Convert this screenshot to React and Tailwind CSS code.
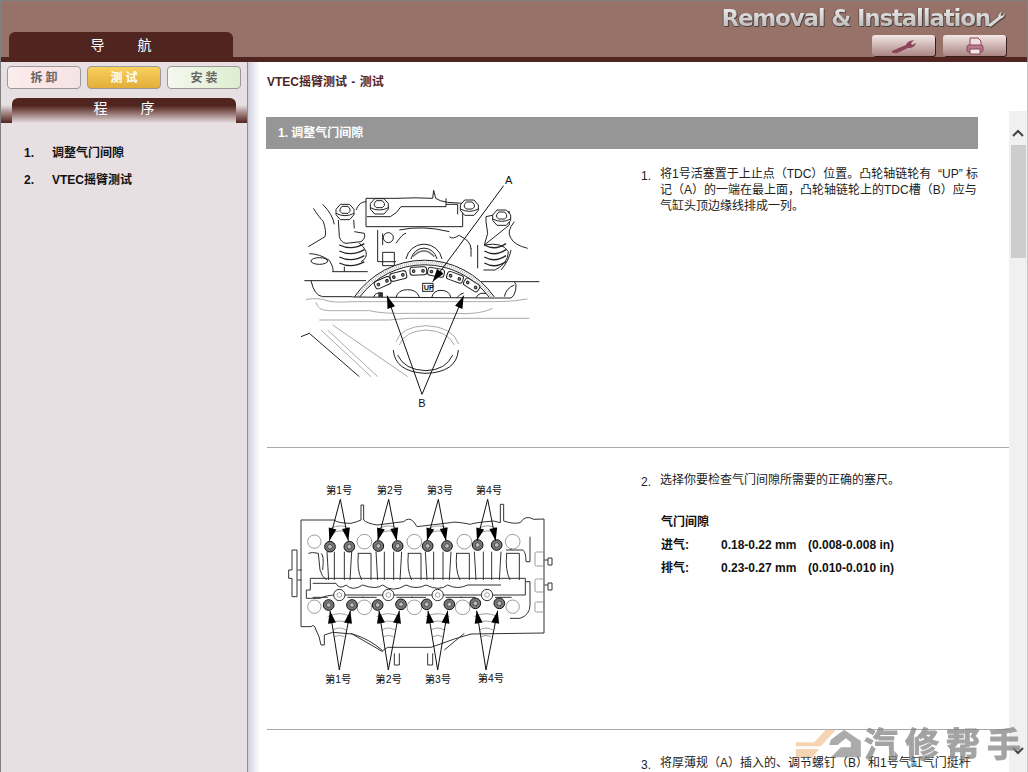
const cjk = "font-['Liberation_Sans','Noto_Sans_CJK_SC',sans-serif]";

// filled arrow head with tip at (x,y), coming from (fx,fy)
function Head({ x, y, fx, fy, len = 38, wide = 12 }) {
  const d = Math.hypot(x - fx, y - fy);
  const ux = (x - fx) / d;
  const uy = (y - fy) / d;
  const bx = x - ux * len;
  const by = y - uy * len;
  const pts = `${x},${y} ${bx - uy * wide},${by + ux * wide} ${bx + uy * wide},${by - ux * wide}`;
  return <polygon points={pts} fill="#000" stroke="none" />;
}

function Leader({ x, y, fx, fy }) {
  return (
    <g>
      <line x1={fx} y1={fy} x2={x} y2={y} stroke="#111" strokeWidth="3" />
      <Head x={x} y={y} fx={fx} fy={fy} />
    </g>
  );
}

function Bolt({ x, y }) {
  return (
    <g fill="#fff" stroke="#222" strokeWidth="3">
      <path d={`M${x - 27} ${y - 8}l13 -15h28l13 15v16l-13 15h-28l-13 -15z`} />
      <path d={`M${x - 27} ${y + 4}q27 14 54 0`} fill="none" />
      <path d={`M${x - 15} ${y - 9}l6 -8h18l6 8v7l-6 6h-18l-6 -6z`} />
    </g>
  );
}

function Spring({ x, w }) {
  return (
    <g fill="none" stroke="#222" strokeWidth="4">
      {[240, 258, 276, 294].map((y) => (
        <path key={y} d={`M${x} ${y}q${w / 2} 18 ${w} -4`} />
      ))}
    </g>
  );
}

// rocker arm timing diagram, drawn in 3x units
function TimingFigure() {
  const links = [
    [305, 353, -24], [352, 333, -14], [412, 318, -2], [465, 322, 10], [522, 337, 20], [572, 360, 32],
  ];
  return (
    <svg className="block h-[250px] w-[260px]" viewBox="0 0 780 750">
      <g fill="none" stroke="#999" strokeWidth="2.5">
        <path d="M75 403q40 -5 60 3t80 4h430q50 0 95 -8" />
        <path d="M105 412q5 25 40 25h120q40 10 130 8h130q70 5 110 -15" />
        <path d="M115 465h210q60 -8 110 -5h310" />
        <path d="M120 495l150 140M140 495l150 140M155 480l225 155" />
        <path d="M345 530q15 -45 90 -48q80 3 98 55M355 540q15 -42 80 -45q65 3 85 45" />
      </g>
      <g fill="none" stroke="#222" strokeWidth="3">
        <path d="M70 347h185M90 347q10 45 35 48h90M215 396l425 3h50q15 -10 15 -40l-5 -9M600 350h175" />
        <path d="M60 515l25 -10l150 130" />
        <path d="M337 555q5 65 95 70q95 -2 100 -70M350 570q20 45 85 47q60 -2 80 -47" />

        {/* sprocket bands */}
        <path d="M220 396a255 255 0 0 1 420 0M236 396a243 243 0 0 1 388 0" />
        <path d="M228 396a249 249 0 0 1 404 0" strokeWidth="8" strokeDasharray="1 5" stroke="#555" />
        <path d="M345 398q5 -24 35 -24q28 0 36 24M452 398q5 -22 28 -22q25 0 30 22M278 396q5 -14 22 -12M585 398q10 -18 30 -12M528 398q8 -12 20 -14" />

        {/* cap */}
        <path d="M255 100h90q60 -3 110 0l3 -24l6 24q10 8 36 12l45 3" />
        <path d="M255 100v85h290v-70" />
        <path d="M258 155h70q20 -10 32 -30h135M495 100v25M495 118h35v30" />
        <path d="M290 195v95M305 205v35M305 262h35v40h-35zM290 290h55" />
        <circle cx="322" cy="218" r="15" />
        <path d="M355 195q70 -15 150 5M345 235q20 -30 30 -30M505 215q10 10 30 -5M535 212q35 15 35 40M590 240v70M570 250v25" />
        <path d="M375 282a55 55 0 0 1 108 0M390 282a40 42 0 0 1 78 0" />
        <path d="M395 275q35 -35 65 0" strokeWidth="5" stroke="#777" />

        {/* left rocker and spring */}
        <path d="M172 165l3 50q5 18 20 20l45 -5q15 -10 10 -25l-30 -5M218 165l2 25M225 135q10 -25 30 -25" />
        <path d="M97 130q20 30 30 40q10 30 5 45l-50 30M125 118q30 30 35 60" />
        <path d="M85 266q30 0 60 20q15 25 10 34h105" />
        <ellipse cx="115" cy="288" rx="25" ry="10" />
        <path d="M240 290q20 -10 15 -30q-5 -15 -20 -25M190 320v-15" />

        {/* right rocker and spring */}
        <path d="M615 155v15l5 35l-10 35l75 -60v-40M615 155l70 -15" />
        <path d="M610 240q55 -10 72 20q0 35 -40 55h-35" />
        <path d="M700 170q-25 30 -10 50q10 20 50 30" />
        <path d="M690 255q-5 30 -30 60M700 360q-25 10 -30 35" />
      </g>
      <Spring x={175} w={75} />
      <Spring x={610} w={65} />
      <Bolt x={192} y={141} />
      <Bolt x={295} y={124} />
      <Bolt x={565} y={128} />
      <Bolt x={662} y={158} />
      {links.map(([x, y, r]) => (
        <g key={x} transform={`rotate(${r} ${x} ${y})`} fill="#fff" stroke="#222" strokeWidth="3">
          <rect x={x - 25} y={y - 12} width="50" height="24" rx="8" />
          <circle cx={x - 14} cy={y} r="4" fill="#888" />
          <circle cx={x + 14} cy={y} r="4" fill="#888" />
        </g>
      ))}
      <rect x="425" y="355" width="31" height="24" fill="#fff" stroke="#222" strokeWidth="3" />
      <text x="428" y="376" fontSize="22" fontWeight="700" fill="#111" fontFamily="Liberation Sans">UP</text>
      <rect x="292" y="382" width="14" height="14" fill="#333" />
      <Leader x={455} y={350} fx={668} fy={62} />
      <Leader x={318} y={392} fx={423} fy={688} />
      <Leader x={548} y={392} fx={423} fy={688} />
      <text x="672" y="58" fontSize="33" fill="#111" fontFamily="Liberation Sans">A</text>
      <text x="412" y="726" fontSize="33" fill="#111" fontFamily="Liberation Sans">B</text>
    </svg>
  );
}

const topBolts = [
  [147, 230], [205, 230], [292, 228], [350, 228], [440, 228], [498, 228], [590, 225], [647, 225],
];
const lowBolts = [
  [143, 405], [213, 405], [290, 405], [360, 403], [437, 403], [505, 403], [583, 400], [655, 400],
];
const topTips = [178, 323, 472, 620];
const lowTips = [175, 322, 470, 615];
const topNames = [[135, "第1号"], [287, "第2号"], [437, "第3号"], [584, "第4号"]];
const lowNames = [[132, "第1号"], [283, "第2号"], [431, "第3号"], [590, "第4号"]];

function ValveFigure() {
  return (
    <svg className="block h-[230px] w-[280px]" viewBox="0 0 840 690">
      <g fill="none" stroke="#333" strokeWidth="3">
        <path d="M60 150h100q10 10 50 10q20 -5 30 -10v-45h8v45q10 10 40 15l80 -10q15 -15 30 0l10 15 100 -12q10 -5 60 5q10 -5 70 -10l20 5v-55h10v50q30 10 50 5q15 -25 40 -10L789 147V489" />
        <path d="M60 150v320h30q10 -10 15 10q10 15 15 45h10v-30l25 -8l60 5q50 15 90 50l15 -10h130l70 -25 50 -15L789 489" />
        <path d="M48 240h-15v60h-10v25h10v55h15zM50 300h12M50 330h12" />
        <path d="M88 360v-35h645v50h-560q-40 0 -55 10h-42v-25z" fill="#fff" />
        <path d="M95 340h70q10 20 30 5q20 20 50 0q40 15 60 0q30 25 70 0q30 15 60 0q40 20 65 0q30 15 60 0h100" />
        <path d="M82 250q10 -5 30 0l5 50q5 20 20 30M120 250q10 5 5 50M230 250h40v80M232 250q-5 50 10 80" />
        <path d="M380 250h40v80M382 250q-5 50 10 80M525 250h40v80M527 250q-5 50 10 80M675 250h40v80M677 250q-5 50 10 80" />
        <path d="M138 245l5 85M160 245v85M190 245v85M212 245l-5 85M285 245l5 85M310 245v85M338 245v85M362 245l-5 85M433 245l5 85M458 245v85M486 245v85M510 245l-5 85M580 245l5 85M607 245v85M632 245v85M660 245l-5 85" />
        <path d="M675 240h50q10 5 10 35h12v-75M690 240v-5" />
        <path d="M735 335h12v70q0 30 -30 40h-30" />
        <path d="M340 550v35h15v-35M440 550v35h15v-35" />
        <path d="M210 490l95 55M550 490l-60 50" />
        <path d="M789 270h12M789 345h12M801 264h12v21h-12zM801 339h12v21h-12z" />
      </g>
      <g fill="none" stroke="#888" strokeWidth="2.5">
        <circle cx="100" cy="215" r="20" />
        <circle cx="250" cy="215" r="22" />
        <circle cx="400" cy="215" r="22" />
        <circle cx="550" cy="215" r="22" />
        <circle cx="695" cy="215" r="22" />
        <circle cx="100" cy="410" r="20" />
        <circle cx="250" cy="412" r="22" />
        <circle cx="400" cy="412" r="22" />
        <circle cx="545" cy="412" r="22" />
        <circle cx="695" cy="410" r="20" />
        <rect x="762" y="246" width="27" height="42" rx="4" />
        <rect x="762" y="327" width="27" height="39" rx="4" />
        <rect x="762" y="396" width="27" height="30" rx="4" />
        {topTips.map((x) => (
          <path key={x} d={`M${x - 28} 175q28 -15 56 0M${x - 24} 190q24 -15 48 0`} />
        ))}
        {lowTips.map((x) => (
          <path key={x} d={`M${x - 35} 440q35 -18 70 0M${x - 28} 460q28 -14 56 0M${x - 20} 480q20 -12 40 0M${x - 15} 500q15 -8 30 0`} />
        ))}
      </g>
      {[163, 310, 458, 606].map((x) => (
        <g key={x}>
          <path d={`M${x - 68} 382h45M${x + 36} 382h50`} stroke="#333" strokeWidth="3" />
          <circle cx={x + 12} cy="375" r="17" fill="#fff" stroke="#333" strokeWidth="3" />
          <circle cx={x + 12} cy="375" r="7" fill="#fff" stroke="#777" strokeWidth="2" />
        </g>
      ))}
      {[...topBolts, ...lowBolts].map(([x, y]) => (
        <g key={`${x}-${y}`}>
          <circle cx={x} cy={y} r="16" fill="#777" stroke="#111" strokeWidth="3" />
          <circle cx={x} cy={y} r="7" fill="#bbb" stroke="#333" strokeWidth="2" />
        </g>
      ))}
      {topTips.map((tx, i) => (
        <g key={tx}>
          <Leader x={topBolts[i * 2][0] - 2} y={212} fx={tx} fy={88} />
          <Leader x={topBolts[i * 2 + 1][0] - 3} y={212} fx={tx} fy={88} />
        </g>
      ))}
      {lowTips.map((tx, i) => (
        <g key={tx}>
          <Leader x={lowBolts[i * 2][0] + 4} y={422} fx={tx} fy={600} />
          <Leader x={lowBolts[i * 2 + 1][0] - 5} y={422} fx={tx} fy={600} />
        </g>
      ))}
      <g fontSize="31" fill="#111" fontFamily="Liberation Sans, Noto Sans CJK SC">
        {topNames.map(([x, t]) => (
          <text key={x} x={x} y="72">{t}</text>
        ))}
        {lowNames.map(([x, t]) => (
          <text key={x} x={x} y={x === 590 ? 636 : 640}>{t}</text>
        ))}
      </g>
    </svg>
  );
}

function TabButton({ className, children }) {
  return (
    <div className={`flex h-[23px] w-[74px] items-center justify-center rounded-[4px] border border-[#9a9a9a] pl-[3px] text-[12px] font-bold tracking-[3px] ${className}`}>
      {children}
    </div>
  );
}

function ToolButton({ children }) {
  return (
    <div className="flex h-[21px] w-[63px] items-center justify-center rounded-[3px] bg-gradient-to-b from-[#f4e8e6] to-[#a98683] shadow-[1px_1px_0_#3b1c18]">
      {children}
    </div>
  );
}

function Step({ num, children }) {
  return (
    <div className="flex text-[12px] leading-[16px] text-[#222]">
      <span className="w-[19px] pt-[2px]">{num}.</span>
      <div className="w-[319px]">{children}</div>
    </div>
  );
}

export default function App() {
  return (
    <div className={`relative flex h-[772px] w-[1028px] flex-col overflow-hidden bg-white ${cjk}`}>
      {/* top banner */}
      <header className="h-[62px] shrink-0 border-t border-r border-l border-[#808080] bg-[#967269]">
        <div className="flex h-[56px] items-end justify-between pl-[8px] pr-[21px]">
          <div className="flex h-[25px] w-[224px] items-center justify-center gap-[33px] rounded-t-[6px] bg-[#50241f] pt-[2px] text-[14px] text-white">
            <span>导</span>
            <span>航</span>
          </div>
          <div className="flex flex-col items-end">
            <div className="mb-[3px] flex items-center font-['DejaVu_Sans',sans-serif] text-[23px] leading-[28px] font-bold tracking-[-1.2px] [filter:drop-shadow(1px_1px_0_#55413c)_drop-shadow(-1px_0_0_#6d5650)]">
              <span className="bg-gradient-to-b from-[#f5f5f5] to-[#b0b0b0] bg-clip-text text-transparent">Removal &amp; Installation</span>
              <svg className="ml-[-4px] h-[20px] w-[20px]" viewBox="0 0 20 20">
                <path d="M2 17l10 -8q0 -4 4 -5l-1.500 3l2 1l2 -3q1 4 -4 6l-10 8z" fill="#d8d8d8" />
              </svg>
            </div>
            <div className="mb-[1px] flex gap-[8px]">
              <ToolButton>
                <svg className="h-[14px] w-[26px]" viewBox="0 0 26 14">
                  <path d="M1 12l14 -6q1 -4 8 -5l-3 3l1 2l4 -2q-1 5 -8 5l-13 6q-3 0 -3 -3z" fill="#8b4558" />
                </svg>
              </ToolButton>
              <ToolButton>
                <svg className="h-[18px] w-[18px]" viewBox="0 0 18 18">
                  <path d="M4 1h8l3 3v5h-11z" fill="#f0dfe0" stroke="#8b4558" />
                  <rect x="1" y="8" width="16" height="7" rx="2" fill="#b87a88" stroke="#8b4558" />
                  <rect x="4" y="12" width="10" height="5" fill="#f3e6e6" stroke="#8b4558" />
                </svg>
              </ToolButton>
            </div>
          </div>
        </div>
        <div className="h-[5px] bg-[#50241f]" />
      </header>

      <div className="flex min-h-0 flex-1">
        {/* left column */}
        <aside className="w-[248px] shrink-0 border-r border-l border-r-[#8f8f8f] border-l-[#808080] bg-[#e8dfe3]">
          <div className="flex gap-[6px] pt-[4px] pl-[6px]">
            <TabButton className="bg-gradient-to-r from-[#fbeeee] via-[#fde4e6] to-[#f4e4e6] text-[#666]">拆卸</TabButton>
            <TabButton className="bg-gradient-to-b from-[#f9d05c] to-[#e3ae39] text-white">测试</TabButton>
            <TabButton className="bg-gradient-to-r from-[#f5f8ee] to-[#ddedd0] text-[#666]">安装</TabButton>
          </div>
          <div className="mt-[9px] flex h-[25px] items-end">
            <div className="h-[18px] w-[11px] bg-gradient-to-t from-[#50241f] to-[#e8dfe3]" />
            <div className="flex h-[25px] w-[224px] items-center justify-center gap-[33px] rounded-t-[6px] bg-gradient-to-b from-[#50241f] from-30% to-[#e8dfe3] pb-[4px] text-[14px] text-white">
              <span>程</span>
              <span>序</span>
            </div>
            <div className="h-[18px] w-[11px] bg-gradient-to-t from-[#50241f] to-[#e8dfe3]" />
          </div>
          <ol className="mt-[22px] flex flex-col gap-[11px] pl-[23px] text-[12px] leading-[16px] font-bold text-[#111]">
            <li className="flex"><span className="w-[28px]">1.</span>调整气门间隙</li>
            <li className="flex"><span className="w-[28px]">2.</span>VTEC摇臂测试</li>
          </ol>
        </aside>

        {/* main pane */}
        <main className="flex min-w-0 flex-1 flex-col border-r border-[#c8c8c8] bg-gradient-to-r from-[#d0d0e0] from-0% to-white to-[1.5%]">
          <div className="h-[49px] shrink-0 pt-[12px] pl-[19px] text-[12px] leading-[16px] font-bold text-[#50241f] [word-spacing:1px]">
            VTEC摇臂测试 - 测试
          </div>
          <div className="flex min-h-0 flex-1">
            <div className="w-[761px] overflow-hidden pt-[6px]">
              <div className="ml-[18px] flex h-[32px] w-[712px] items-center pl-[12px] text-[12px] font-bold text-white bg-[#969696]">
                1. 调整气门间隙
              </div>

              <div className="ml-[19px] flex h-[299px] border-b border-[#a8a8a8]">
                <div className="w-[374px] pt-[16px] pl-[14px]"><TimingFigure /></div>
                <div className="pt-[17px]">
                  <Step num="1">
                    将1号活塞置于上止点（TDC）位置。凸轮轴链轮有&nbsp;&nbsp;“UP”&nbsp;标记（A）的一端在最上面，凸轮轴链轮上的TDC槽（B）应与气缸头顶边缘线排成一列。
                  </Step>
                </div>
              </div>

              <div className="ml-[19px] flex h-[282px] border-b border-[#a8a8a8]">
                <div className="w-[374px] pt-[22px] pl-[14px]"><ValveFigure /></div>
                <div className="pt-[24px]">
                  <Step num="2">
                    选择你要检查气门间隙所需要的正确的塞尺。
                    <div className="mt-[26px] pl-[1px] font-bold text-[#111]">
                      <p>气门间隙</p>
                      <p className="mt-[7px] flex"><span className="w-[60px]">进气:</span><span className="w-[87px]">0.18-0.22 mm</span>(0.008-0.008 in)</p>
                      <p className="mt-[7px] flex"><span className="w-[60px]">排气:</span><span className="w-[87px]">0.23-0.27 mm</span>(0.010-0.010 in)</p>
                    </div>
                  </Step>
                </div>
              </div>

              <div className="ml-[393px] pt-[25px]">
                <Step num="3">将厚薄规（A）插入的、调节螺钉（B）和1号气缸气门挺杆</Step>
              </div>
            </div>

            {/* scrollbar */}
            <div className="flex h-full w-[18px] flex-col items-center bg-[#f0f0f0]">
              <svg className="mt-[18px] mb-[8px] h-[8px] w-[12px]" viewBox="0 0 12 8">
                <path d="M1 7l5 -5l5 5" fill="none" stroke="#444" strokeWidth="2" />
              </svg>
              <div className="h-[113px] w-[15px] bg-[#cdcdcd]" />
              <div className="flex-1" />
              <svg className="mb-[17px] h-[8px] w-[12px]" viewBox="0 0 12 8">
                <path d="M1 1l5 5l5 -5" fill="none" stroke="#444" strokeWidth="2" />
              </svg>
            </div>
          </div>
        </main>
      </div>

      {/* watermark */}
      <div className="pointer-events-none absolute right-0 bottom-[11px] flex items-start opacity-75">
        <svg className="mr-[3px] h-[29px] w-[67px]" viewBox="0 0 200 87">
          <path d="M5 40h55l35 -38h30l-45 50h-75z" fill="#f3c69a" />
          <path d="M5 60h70l-20 25h-50z" fill="#f3c69a" />
          <path d="M110 32l40 -30l50 34v49h-90l30 -30h30v-15l-15 -12l-25 20h-25z" fill="#8f8f8f" />
        </svg>
        <span className="text-[34px] leading-[32px] font-bold tracking-[7px] text-[#858585] [-webkit-text-stroke:1px_#858585]">汽修帮手</span>
      </div>
    </div>
  );
}
